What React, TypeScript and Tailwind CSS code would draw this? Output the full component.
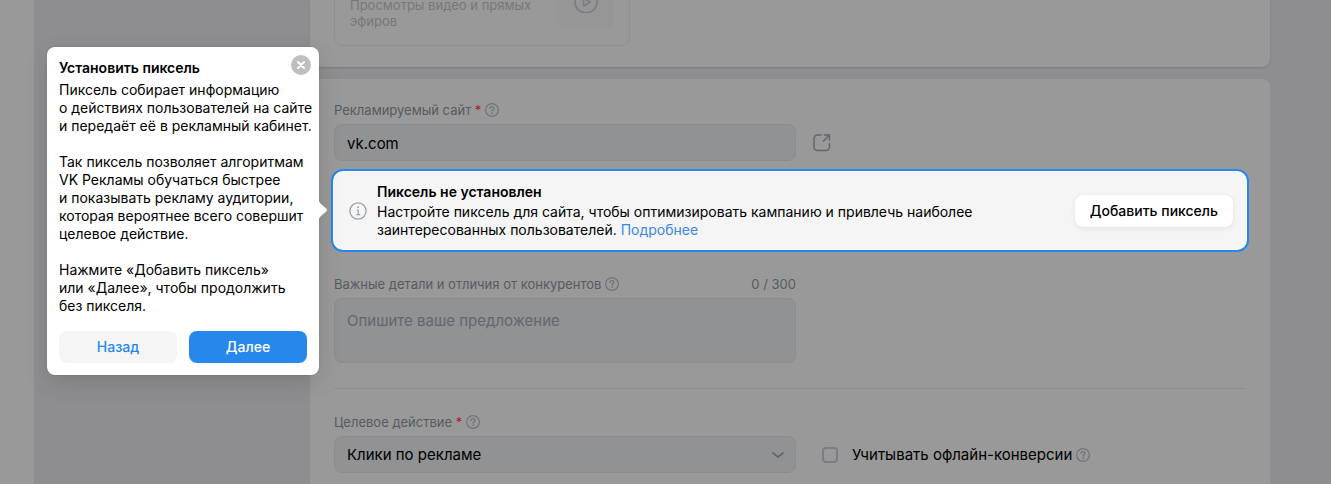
import type { ReactNode } from "react";

function HelpIcon() {
  return (
    <svg className="size-[14px] shrink-0 overflow-visible text-[#6f747c]" viewBox="0 0 14 14" fill="none" stroke="currentColor" strokeLinecap="round" strokeLinejoin="round" aria-hidden="true">
      <circle cx="7" cy="7" r="6.400" strokeWidth="1.200" />
      <path d="M5.100 5.400c0-1.100.8-1.800 1.900-1.800s1.900.7 1.900 1.700c0 1.400-1.800 1.400-1.800 2.800" strokeWidth="1.300" />
      <circle cx="7.100" cy="10.100" r=".4" strokeWidth=".8" fill="currentColor" />
    </svg>
  );
}

function FieldLabel({ htmlFor, required, children }: { htmlFor: string; required?: boolean; children: ReactNode }) {
  return (
    <div className="flex h-4 items-center gap-1">
      <label htmlFor={htmlFor} className="text-[13px] leading-4 text-[#565b63]">
        {children}
        {required && <span className="text-[#a81c22]"> *</span>}
      </label>
      <button type="button" aria-label="Подсказка" className="flex">
        <HelpIcon />
      </button>
    </div>
  );
}

function InstallTip() {
  return (
    <div role="dialog" aria-labelledby="tip-title" className="absolute top-[47px] left-[47px] z-10 w-[272px] rounded-lg bg-white p-3 text-sm leading-[18px] whitespace-nowrap text-black shadow-[0_8px_24px_rgba(0,0,0,0.12),0_0_2px_rgba(0,0,0,0.15)]">
      <svg className="absolute top-[154px] left-full h-[18px] w-2" viewBox="0 0 8 18" fill="#fff" aria-hidden="true">
        <path d="M0 0c.5 1.500 1.400 2.400 2.500 3.400L7.200 7.500c1 .9 1 2.100 0 3L2.500 14.600C1.400 15.600.5 16.500 0 18z" />
      </svg>
      <button type="button" aria-label="Закрыть" className="absolute top-2 right-2 flex size-5 items-center justify-center rounded-full bg-[#bfbfbf]">
        <svg className="size-2" viewBox="0 0 8 8" fill="none" stroke="#fff" strokeWidth="1.900" strokeLinecap="round" aria-hidden="true">
          <path d="M1 1l6 6M7 1L1 7" />
        </svg>
      </button>
      <h2 id="tip-title" className="mb-1 font-semibold">Установить пиксель</h2>
      <p>
        Пиксель собирает информацию
        <br />о действиях пользователей на сайте
        <br />и передаёт её в рекламный кабинет.
      </p>
      <p className="mt-[18px]">
        Так пиксель позволяет алгоритмам
        <br />VK Рекламы обучаться быстрее
        <br />и показывать рекламу аудитории,
        <br />которая вероятнее всего совершит
        <br />целевое действие.
      </p>
      <p className="mt-[18px]">
        Нажмите «Добавить пиксель»
        <br />или «Далее», чтобы продолжить
        <br />без пикселя.
      </p>
      <div className="mt-4 flex gap-3">
        <button type="button" className="h-8 flex-1 rounded-lg bg-[#f5f5f5] font-medium text-[#2688eb]">Назад</button>
        <button type="button" className="h-8 flex-1 rounded-lg bg-[#2688eb] font-medium text-white">Далее</button>
      </div>
    </div>
  );
}

function PixelBanner() {
  return (
    <div className="-mx-[3px] mt-2 flex min-h-[83px] items-center gap-2.5 rounded-xl border-2 border-[#2688eb] bg-[#f5f5f5] pr-3.5 pl-4 text-sm leading-[18px] text-black shadow-[inset_0_0_0_1px_#fff]">
      <svg className="size-[18px] shrink-0 text-[#99a2ad]" viewBox="0 0 18 18" fill="none" stroke="currentColor" strokeLinecap="round" aria-hidden="true">
        <circle cx="9" cy="9" r="8.100" strokeWidth="1.300" />
        <path d="M8.200 8H9.200v4.600M7.800 12.700h2.800" strokeWidth="1.200" />
        <circle cx="9" cy="5.200" r=".9" fill="currentColor" stroke="none" />
      </svg>
      <div className="flex-1">
        <h3 className="mb-0.5 font-semibold">Пиксель не установлен</h3>
        <p className="max-w-[600px]">
          Настройте пиксель для сайта, чтобы оптимизировать кампанию и привлечь наиболее заинтересованных пользователей.{" "}
          <a href="#more" className="text-[#3a88e3]">Подробнее</a>
        </p>
      </div>
      <button type="button" className="h-8 shrink-0 rounded-lg bg-white px-[15px] font-medium shadow-[0_2px_6px_rgba(0,0,0,0.06),0_0_2px_rgba(0,0,0,0.06)]">
        Добавить пиксель
      </button>
    </div>
  );
}

export default function App() {
  return (
    <div className="relative flex h-screen overflow-hidden bg-[#8e8e90] font-['Inter','Liberation_Sans',sans-serif] text-black">
      <nav className="w-[34px] shrink-0 bg-[#999999]" />
      <aside className="w-[276px] shrink-0" />
      <main className="mr-[61px] min-w-0 flex-1">
        <section className="flex h-[67px] items-end rounded-b-lg bg-[#999999] px-6 pb-[21px] shadow-[0_1px_2px_rgba(0,0,0,0.12)]">
          <div className="flex h-[88px] w-[296px] shrink-0 items-end justify-between gap-4 rounded-lg border border-[#8f9092] px-[15px] pb-4">
            <p className="text-[13px] leading-4 text-[#74787e]">
              Просмотры видео и прямых эфиров
            </p>
            <div className="flex size-14 shrink-0 items-center justify-center rounded-lg bg-[#969697]">
              <svg className="size-6" viewBox="0 0 24 24" fill="none" stroke="#787d84" strokeWidth="1.600" strokeLinejoin="round" aria-hidden="true">
                <circle cx="12" cy="13" r="11" />
                <path d="M9.500 9v8l6.500-4z" />
              </svg>
            </div>
          </div>
        </section>

        <section className="mt-3 min-h-screen rounded-t-lg bg-[#999999] px-6 pt-[23px]">
          <FieldLabel htmlFor="site" required>Рекламируемый сайт</FieldLabel>
          <div className="mt-1.5 flex items-center gap-4">
            <input id="site" type="text" defaultValue="vk.com" className="h-[37px] w-[462px] rounded-lg border border-[#8a8c8f] bg-[#909294] px-3 pt-px text-[15px] leading-5 outline-none" />
            <a href="https://vk.com" aria-label="Открыть сайт" className="flex">
              <svg className="size-5" viewBox="0 0 20 20" fill="none" stroke="#61666d" strokeWidth="1.500" strokeLinecap="round" strokeLinejoin="round" aria-hidden="true">
                <path d="M9 2H5.500A3.500 3.500 0 0 0 2 5.500v8.500a3.500 3.500 0 0 0 3.500 3.500H14a3.500 3.500 0 0 0 3.500-3.500v-3.500M12.500 2h5v5M17.500 2l-6 6" />
              </svg>
            </a>
          </div>

          <PixelBanner />

          <div className="mt-6 w-[462px]">
            <div className="flex items-center justify-between">
              <FieldLabel htmlFor="details">Важные детали и отличия от конкурентов</FieldLabel>
              <span className="text-[13px] leading-4 text-[#565b63]">0 / 300</span>
            </div>
            <textarea id="details" placeholder="Опишите ваше предложение" className="mt-1.5 block h-[65px] w-full resize-none rounded-lg border border-[#8a8c8f] bg-[#909294] px-3 py-3 text-[15px] leading-5 outline-none placeholder:text-[#62676e]" />
          </div>

          <hr className="mt-[25px] mb-[25px] border-[#8c8d8f]" />

          <FieldLabel htmlFor="goal" required>Целевое действие</FieldLabel>
          <div className="mt-1.5 flex items-center gap-[26px]">
            <div className="relative w-[462px]">
              <select id="goal" className="block h-[37px] w-full appearance-none rounded-lg border border-[#8a8c8f] bg-[#909294] px-3 pt-px text-[15px] leading-5 outline-none">
                <option>Клики по рекламе</option>
              </select>
              <svg className="pointer-events-none absolute top-4 right-3 h-[7px] w-3" viewBox="0 0 12 7" fill="none" stroke="#61666d" strokeWidth="1.700" strokeLinecap="round" strokeLinejoin="round" aria-hidden="true">
                <path d="M1 1l5 4 5-4" />
              </svg>
            </div>
            <div className="flex items-center gap-1">
              <input id="offline" type="checkbox" className="size-4 appearance-none rounded-[4px] border-2 border-[#797e85]" />
              <label htmlFor="offline" className="ml-2.5 text-[15px] leading-5">Учитывать офлайн-конверсии</label>
              <button type="button" aria-label="Подсказка" className="flex">
                <HelpIcon />
              </button>
            </div>
          </div>
        </section>
      </main>

      <InstallTip />
    </div>
  );
}
